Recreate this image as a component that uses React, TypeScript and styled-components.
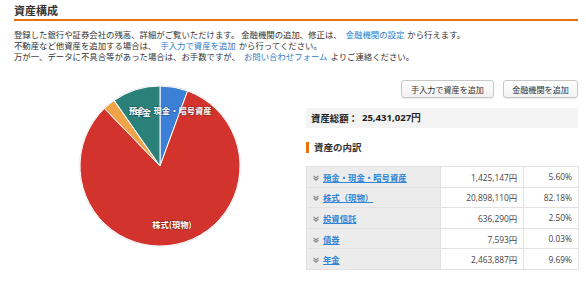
import styled, { createGlobalStyle } from 'styled-components'

const GlobalStyle = createGlobalStyle`
    html, body {
        margin: 0;
        padding: 0;
        background: #fff;
    }
    body {
        font-family: "Noto Sans CJK JP", "Noto Sans", sans-serif;
        color: #333;
    }
`

const Page = styled.div`
    width: 586px;
    height: 294px;
    padding: 4px 8px 0 14px;
    box-sizing: border-box;
    overflow: hidden;
`

const Title = styled.h2`
    margin: 0;
    font-size: 11px;
    line-height: 13px;
    font-weight: bold;
    color: #333;
    padding-bottom: 2px;
    border-bottom: 2px solid #e8700f;
`

const Intro = styled.p`
    margin: 8px 0 0;
    font-size: 8.4px;
    line-height: 11px;
    white-space: nowrap;
`

const Link = styled.a`
    color: #2f7cc8;
    text-decoration: none;
    margin: 0 3px 0 4px;
`

const Columns = styled.div`
    display: flex;
    margin-top: 18px;
`

const ChartColumn = styled.div`
    flex: 1;
    display: flex;
    justify-content: center;
    padding-top: 4px;
`

const DetailColumn = styled.div`
    width: 272px;
    display: flex;
    flex-direction: column;
`

const ButtonRow = styled.div`
    display: flex;
    justify-content: flex-end;
    gap: 9px;
`

const Button = styled.button<{ $w: number }>`
    width: ${p => p.$w}px;
    height: 18px;
    padding: 0;
    font-family: inherit;
    font-size: 8.1px;
    color: #333;
    background: linear-gradient(#fff, #f2f2f2);
    border: 1px solid #c8c8c8;
    border-radius: 3px;
    box-shadow: 0 1px 1px rgba(0, 0, 0, 0.08);
`

const TotalBox = styled.div`
    margin-top: 10px;
    height: 20px;
    background: #f3f3f3;
    display: flex;
    align-items: center;
    padding-left: 5px;
    font-size: 9.4px;
    font-weight: bold;
    color: #222;
`

const Amount = styled.span`
    margin-left: 4px;
    font-family: "Open Sans", "Noto Sans", sans-serif;
    font-size: 9.6px;
`

const Heading = styled.h3`
    margin: 14px 0 0;
    height: 11px;
    border-left: 3px solid #e8700f;
    padding-left: 5px;
    font-size: 9.5px;
    line-height: 11px;
    font-weight: bold;
    color: #333;
`

const Table = styled.table`
    margin-top: 13px;
    width: 273px;
    border-collapse: collapse;
    border: 1px solid #dcdcdc;
    font-size: 8.4px;
`

const Cell = styled.td<{ $head?: boolean; $w: number }>`
    width: ${p => p.$w}px;
    height: 20.6px;
    padding: 0 6px;
    box-sizing: border-box;
    border: 1px solid #e2e2e2;
    background: ${p => (p.$head ? '#ececec' : '#fff')};
    text-align: ${p => (p.$head ? 'left' : 'right')};
    color: #444;
    font-family: ${p => (p.$head ? 'inherit' : '"Open Sans", "Noto Sans CJK JP", sans-serif')};
    white-space: nowrap;
`

const RowLink = styled.a`
    color: #2f86d6;
    text-decoration: underline;
    font-weight: bold;
    margin-left: 4px;
`

const Chevron = () => (
    <svg width="6" height="6" viewBox="0 0 6 6">
        <path d="M0.5 0.8 L3 3 L5.5 0.8 M0.5 3 L3 5.2 L5.5 3" stroke="#8a8a8a" strokeWidth="1.1" fill="none" />
    </svg>
)

const assets = [
    { name: '預金・現金・暗号資産', amount: 1425147, color: '#3b7fd6', label: true },
    { name: '株式（現物）', chart: '株式(現物)', amount: 20898110, color: '#d2332c', label: true },
    { name: '投資信託', amount: 636290, color: '#f0a347', label: false },
    { name: '債券', amount: 7593, color: '#8e5fb8', label: false },
    { name: '年金', amount: 2463887, color: '#2b8079', label: true },
]

const total = assets.reduce((s, a) => s + a.amount, 0)

const PieLabel = styled.text`
    font-family: "Noto Sans CJK JP", sans-serif;
    font-size: 8.3px;
    font-weight: bold;
    fill: #fff;
    paint-order: stroke;
    stroke: rgba(0, 0, 0, 0.25);
    stroke-width: 1.5px;
`

function Pie() {
    const R = 80
    const c = 82
    let acc = 0
    const slices = assets.map(a => {
        const start = (acc / total) * Math.PI * 2
        acc += a.amount
        const end = (acc / total) * Math.PI * 2
        const x1 = c + R * Math.sin(start)
        const y1 = c - R * Math.cos(start)
        const x2 = c + R * Math.sin(end)
        const y2 = c - R * Math.cos(end)
        const large = end - start > Math.PI ? 1 : 0
        const mid = (start + end) / 2
        return {
            ...a,
            d: `M${c} ${c} L${x1} ${y1} A${R} ${R} 0 ${large} 1 ${x2} ${y2} Z`,
            lx: c + 58 * Math.sin(mid),
            ly: c - 58 * Math.cos(mid) + 3,
        }
    })
    return (
        <svg width="164" height="164" viewBox="0 0 164 164">
            <circle cx={c} cy={c} r={R + 0.8} fill="#e4e4e4" />
            {slices.map(s => (
                <path key={s.name} d={s.d} fill={s.color} stroke="#fff" strokeWidth="1" />
            ))}
            {slices.filter(s => s.label).map(s => (
                <PieLabel key={s.name} x={s.lx} y={s.ly} textAnchor="middle" dominantBaseline="middle">
                    {s.chart ?? s.name}
                </PieLabel>
            ))}
        </svg>
    )
}

export default function App() {
    return (
        <Page>
            <GlobalStyle />
            <Title>資産構成</Title>
            <Intro>
                登録した銀行や証券会社の残高、詳細がご覧いただけます。 金融機関の追加、修正は、
                <Link>金融機関の設定</Link>から行えます。
                <br />
                不動産など他資産を追加する場合は、
                <Link>手入力で資産を追加</Link>から行ってください。
                <br />
                万が一、データに不具合等があった場合は、お手数ですが、
                <Link>お問い合わせフォーム</Link>よりご連絡ください。
            </Intro>
            <Columns>
                <ChartColumn>
                    <Pie />
                </ChartColumn>
                <DetailColumn>
                    <ButtonRow>
                        <Button $w={93}>手入力で資産を追加</Button>
                        <Button $w={75}>金融機関を追加</Button>
                    </ButtonRow>
                    <TotalBox>
                        資産総額：<Amount>{total.toLocaleString('ja-JP')}円</Amount>
                    </TotalBox>
                    <Heading>資産の内訳</Heading>
                    <Table>
                        <tbody>
                            {assets.map(a => (
                                <tr key={a.name}>
                                    <Cell $head $w={134}>
                                        <Chevron />
                                        <RowLink>{a.name}</RowLink>
                                    </Cell>
                                    <Cell $w={84}>{a.amount.toLocaleString('ja-JP')}円</Cell>
                                    <Cell $w={55}>{((a.amount / total) * 100).toFixed(2)}%</Cell>
                                </tr>
                            ))}
                        </tbody>
                    </Table>
                </DetailColumn>
            </Columns>
        </Page>
    )
}
